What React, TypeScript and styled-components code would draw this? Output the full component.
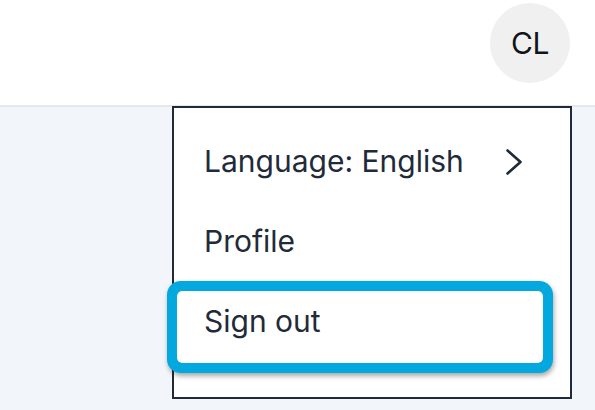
import React from "react";
import styled, { createGlobalStyle } from "styled-components";

const Global = createGlobalStyle`
  html, body { margin: 0; padding: 0; }
  body {
    width: 595px;
    height: 410px;
    overflow: hidden;
    background: #f2f6fb;
    font-family: Inter, "Open Sans", sans-serif;
  }
`;

const Page = styled.div`
  position: relative;
  width: 595px;
  height: 410px;
  background: #f2f6fb;
`;

const Header = styled.header`
  height: 102px;
  background: #ffffff;
  border-bottom: 2px solid #e6e8eb;
  display: flex;
  justify-content: flex-end;
  align-items: flex-start;
  padding: 3px 25px 0 0;
  box-sizing: content-box;
`;

const Avatar = styled.div`
  width: 80px;
  height: 80px;
  border-radius: 50%;
  background: #f0f0f0;
  color: #111418;
  font-size: 30px;
  display: flex;
  align-items: center;
  justify-content: center;
  letter-spacing: -0.5px;
`;

const Menu = styled.div`
  position: absolute;
  left: 172px;
  top: 106px;
  width: 396px;
  height: 266px;
  background: #ffffff;
  border: 2px solid #1f2a3a;
  padding: 23px 0 0 0;
  box-sizing: content-box;
  display: flex;
  flex-direction: column;
  gap: 8px;
`;

const Item = styled.div<{ $focused?: boolean }>`
  margin-left: 3px;
  width: 366px;
  height: 72px;
  box-sizing: border-box;
  padding: 12px 20px 0 27px;
  display: flex;
  align-items: flex-start;
  justify-content: space-between;
  font-size: 30px;
  line-height: 36px;
  color: #1f2a3a;
  border-radius: 5px;
  box-shadow: ${(p) =>
    p.$focused
      ? "0 0 0 10px #02a8de, 1px 3px 5px 10px rgba(0,0,0,0.35)"
      : "none"};
`;

const Chevron = styled.svg`
  width: 17px;
  height: 26px;
  margin-top: 6px;
`;

export default function App() {
  return (
    <Page>
      <Global />
      <Header>
        <Avatar>CL</Avatar>
      </Header>
      <Menu>
        <Item>
          <span>Language: English</span>
          <Chevron viewBox="0 0 17 26" fill="none">
            <path
              d="M1.5 1.5 L14.5 13 L1.5 24.5"
              stroke="#1f2a3a"
              strokeWidth="2.6"
              strokeLinecap="round"
              strokeLinejoin="round"
            />
          </Chevron>
        </Item>
        <Item>
          <span>Profile</span>
        </Item>
        <Item $focused>
          <span>Sign out</span>
        </Item>
      </Menu>
    </Page>
  );
}
